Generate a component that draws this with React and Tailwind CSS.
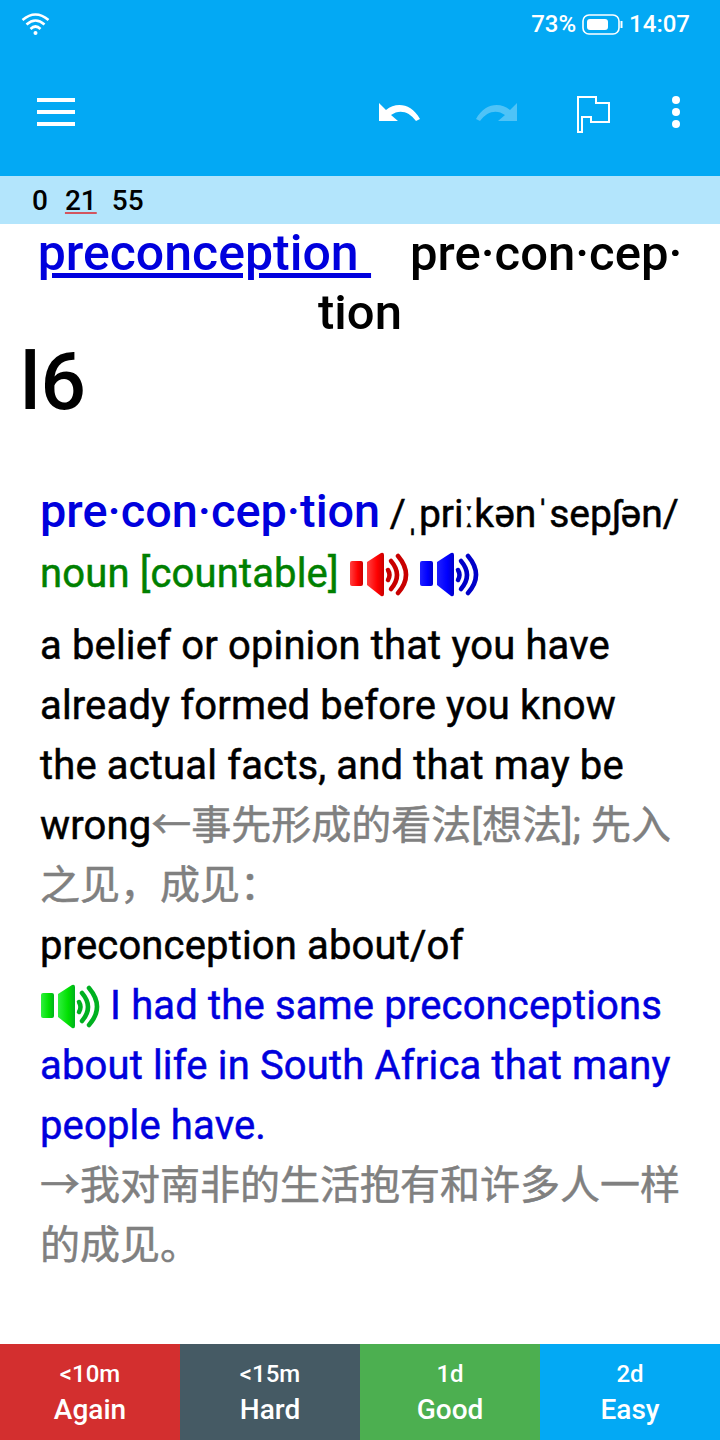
import React from 'react';

const Speaker = ({ id, light, color, dark }) => (
  <svg width="60" height="45" viewBox="0 0 60 45" className="inline-block align-[-10px] blur-[0.7px]">
    <defs>
      <linearGradient id={id} x1="0" y1="0" x2="1" y2="0">
        <stop offset="0" stopColor={light} />
        <stop offset="0.6" stopColor={color} />
        <stop offset="1" stopColor={dark} />
      </linearGradient>
    </defs>
    <rect x="1" y="9" width="13" height="25" rx="2" fill={`url(#${id})`} />
    <path d="M18 10 L32 1 Q35 0 35 3 L35 42 Q35 45 32 44 L18 33 Z" fill={`url(#${id})`} />
    <path d="M39 18 Q42 23 39 28" fill="none" stroke={dark} strokeWidth="4.5" strokeLinecap="round" />
    <path d="M42 9 Q54 23 42 37" fill="none" stroke={dark} strokeWidth="4.5" strokeLinecap="round" />
    <path d="M49 4 Q65 23 49 41" fill="none" stroke={dark} strokeWidth="4.5" strokeLinecap="round" />
  </svg>
);

const buttons = [
  { time: '<10m', label: 'Again', color: 'bg-[#d32f2f]' },
  { time: '<15m', label: 'Hard', color: 'bg-[#455a64]' },
  { time: '1d', label: 'Good', color: 'bg-[#4caf50]' },
  { time: '2d', label: 'Easy', color: 'bg-[#03a9f4]' },
];

const App = () => {
  return (
    <div className="w-[720px] h-[1440px] flex flex-col bg-white overflow-hidden font-['Roboto','Noto_Sans_CJK_SC',sans-serif]">
      <div className="h-[176px] bg-[#03a9f4] flex flex-col text-white">
        {/* status bar */}
        <div className="h-[48px] flex items-center justify-between pl-[21px] pr-[30px]">
          <svg width="29" height="24" viewBox="0 0 29 24" fill="none" stroke="white" strokeWidth="2.6">
            <path d="M1.5 8 Q14.5 -3 27.5 8" />
            <path d="M5.5 12.5 Q14.5 4.5 23.5 12.5" />
            <path d="M9.5 17 Q14.5 12 19.5 17" />
            <circle cx="14.5" cy="21" r="2" fill="white" stroke="none" />
          </svg>
          <div className="flex items-center gap-[6px] text-[24px] font-medium leading-none">
            <span>73%</span>
            <svg width="41" height="21" viewBox="0 0 41 21" fill="none">
              <rect x="1" y="1" width="36" height="19" rx="6" stroke="white" strokeWidth="1.6" />
              <rect x="5" y="5" width="21" height="11" rx="3" fill="white" />
              <rect x="38.5" y="7" width="2" height="7" fill="white" />
            </svg>
            <span>14:07</span>
          </div>
        </div>
        {/* toolbar */}
        <div className="flex-1 flex items-center pl-[37px]">
          <div className="w-[38px] flex flex-col gap-[8px]">
            <div className="h-[4px] bg-white" />
            <div className="h-[4px] bg-white" />
            <div className="h-[4px] bg-white" />
          </div>
          <div className="ml-auto flex items-center pr-[40px]">
            <svg width="42" height="20" viewBox="0 0 42 20" fill="white">
              <path d="M0 1 L7 8 C17 0 32 1 41 17 L37 19 C30 9 20 7 12 13 L19 19 L0 19 Z" />
            </svg>
            <svg width="42" height="20" viewBox="0 0 42 20" fill="#4fc3f7" className="ml-[54px] -scale-x-100">
              <path d="M0 1 L7 8 C17 0 32 1 41 17 L37 19 C30 9 20 7 12 13 L19 19 L0 19 Z" />
            </svg>
            <svg width="33" height="37" viewBox="0 0 33 37" fill="none" stroke="white" strokeWidth="2" className="ml-[60px] mt-[4px]">
              <path d="M1 36 L1 1 L19 1 L19 7 L32 7 L32 26 L14 26 L14 21 L5 21 L5 36 Z" />
            </svg>
            <div className="ml-[62px] flex flex-col gap-[4px]">
              <div className="w-[8px] h-[8px] rounded-full bg-white" />
              <div className="w-[8px] h-[8px] rounded-full bg-white" />
              <div className="w-[8px] h-[8px] rounded-full bg-white" />
            </div>
          </div>
        </div>
      </div>

      <div className="h-[48px] bg-[#b3e5fc] flex items-center pl-[32px] pt-[2px] text-[28px] font-medium text-black leading-none">
        <span>0</span>
        <span className="ml-[17px] underline decoration-[#d2555f] decoration-2 underline-offset-[2px]">21</span>
        <span className="ml-[15px]">55</span>
      </div>

      <div className="flex-1 overflow-hidden">
        <div className="text-center text-[50px] leading-[58px] px-[20px] font-medium">
          <a className="text-[#0000dd] underline">preconception&nbsp;</a>
          <span className="ml-[39px] text-black text-[49px]">pre·con·cep·<wbr />tion</span>
        </div>
        <div className="text-[80px] leading-[80px] pl-[20px] text-black font-medium">l6</div>

        {/* regular weight plus a hair of stroke sits closest to the reference's text weight */}
        <div className="px-[40px] pt-[59px] text-[40px] leading-[60px] text-black tracking-[0.15px] [-webkit-text-stroke:0.5px]">
          <div className="whitespace-nowrap tracking-normal">
            <span className="text-[#0000dd] text-[46.8px] font-medium [-webkit-text-stroke:0px]">pre·con·cep·tion</span>
            <span className="text-[39px]"> /ˌpriːkənˈsepʃən/</span>
          </div>
          <div>
            <span className="text-[#008000]">noun [countable]</span> <Speaker id="red" light="#ff4040" color="#ff0000" dark="#c80000" /> <Speaker id="blue" light="#2020ff" color="#0000ff" dark="#0000c8" />
          </div>
          <div className="mt-[12px]">
            a belief or opinion that you have already formed before you know the actual facts, and that may be wrong
            <span className="text-[#808080] tracking-normal">←事先形成的看法[想法]; 先入之见，成见：</span>
          </div>
          <div>preconception about/of</div>
          <div className="text-[#0000dd]">
            <Speaker id="green" light="#30f040" color="#00e000" dark="#00b020" /> I had the same preconceptions about life in South Africa that many people have.
          </div>
          <div className="text-[#808080] tracking-normal">→我对南非的生活抱有和许多人一样的成见。</div>
        </div>
      </div>

      <div className="h-[96px] flex text-white">
        {buttons.map(b => (
          <div key={b.label} className={`w-[180px] flex flex-col items-center pt-[14px] font-medium ${b.color}`}>
            <span className="text-[24px] leading-[33px]">{b.time}</span>
            <span className="text-[28px] leading-[38px]">{b.label}</span>
          </div>
        ))}
      </div>
    </div>
  );
};

export default App;
